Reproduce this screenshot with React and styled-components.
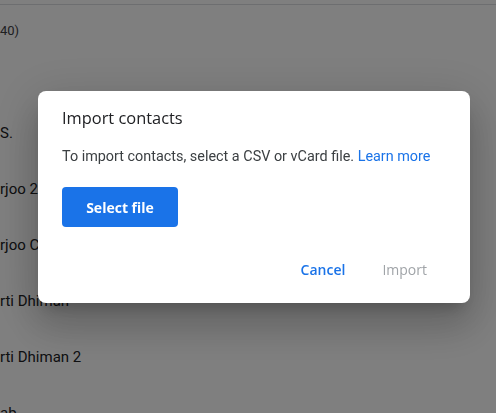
import React from 'react';
import styled, { createGlobalStyle } from 'styled-components';

const GlobalStyle = createGlobalStyle`
  html, body {
    margin: 0;
    padding: 0;
    background: #ffffff;
    font-family: Roboto, "Liberation Sans", sans-serif;
    overflow: hidden;
  }
`;

const Page = styled.div`
  height: 413px;
  width: 496px;
  overflow: hidden;
  color: #202124;
`;

const TopBar = styled.div`
  height: 4px;
  border-bottom: 1px solid #dadce0;
`;

const Heading = styled.div`
  box-sizing: border-box;
  height: 100px;
  padding-top: 17px;
  font-size: 13px;
  line-height: 18px;
  color: #3c4043;
`;

const Row = styled.div`
  height: 56px;
  display: flex;
  align-items: center;
  font-size: 15px;
  white-space: nowrap;
`;

const Scrim = styled.div`
  position: fixed;
  inset: 0;
  background: rgba(0, 0, 0, 0.5);
  padding: 91px 0 0 38px;
`;

const Dialog = styled.div`
  width: 432px;
  box-sizing: border-box;
  background: #ffffff;
  border-radius: 8px;
  padding: 15px 0 16px 24px;
  box-shadow: 0 11px 15px -7px rgba(0, 0, 0, 0.2),
    0 24px 38px 3px rgba(0, 0, 0, 0.14), 0 9px 46px 8px rgba(0, 0, 0, 0.12);
`;

const Title = styled.h2`
  margin: 0;
  font-family: "Open Sans", Roboto, sans-serif;
  font-weight: 500;
  font-size: 16.4px;
  line-height: 24px;
  color: #202124;
`;

const Body = styled.p`
  margin: 17px 0 0;
  font-size: 14.4px;
  line-height: 20px;
  color: #3c4043;
`;

const Link = styled.a`
  color: #1a73e8;
  text-decoration: none;
`;

const PrimaryButton = styled.button`
  margin-top: 20px;
  width: 116px;
  height: 40px;
  border: none;
  border-radius: 4px;
  background: #1a73e8;
  color: #ffffff;
  font-family: "Open Sans", Roboto, sans-serif;
  font-weight: 700;
  font-size: 14px;
`;

const Actions = styled.div`
  margin-top: 24px;
  display: flex;
  justify-content: flex-end;
  gap: 5px;
  padding-right: 27px;
`;

const TextButton = styled.button`
  height: 36px;
  padding: 0 16px;
  border: none;
  background: none;
  font-family: "Open Sans", Roboto, sans-serif;
  font-weight: ${(p) => (p.disabled ? 500 : 600)};
  font-size: 14px;
  color: ${(p) => (p.disabled ? '#a0a4a8' : '#1a73e8')};
`;

const names = ['S.', 'rjoo 2', 'rjoo C', 'rti Dhiman', 'rti Dhiman 2', 'ab'];

export default function App() {
  return (
    <>
      <GlobalStyle />
      <Page>
        <TopBar />
        <Heading>40)</Heading>
        {names.map((n) => (
          <Row key={n}>{n}</Row>
        ))}
      </Page>
      <Scrim>
        <Dialog role="dialog">
          <Title>Import contacts</Title>
          <Body>
            To import contacts, select a CSV or vCard file. <Link href="#">Learn more</Link>
          </Body>
          <PrimaryButton>Select file</PrimaryButton>
          <Actions>
            <TextButton>Cancel</TextButton>
            <TextButton disabled>Import</TextButton>
          </Actions>
        </Dialog>
      </Scrim>
    </>
  );
}
